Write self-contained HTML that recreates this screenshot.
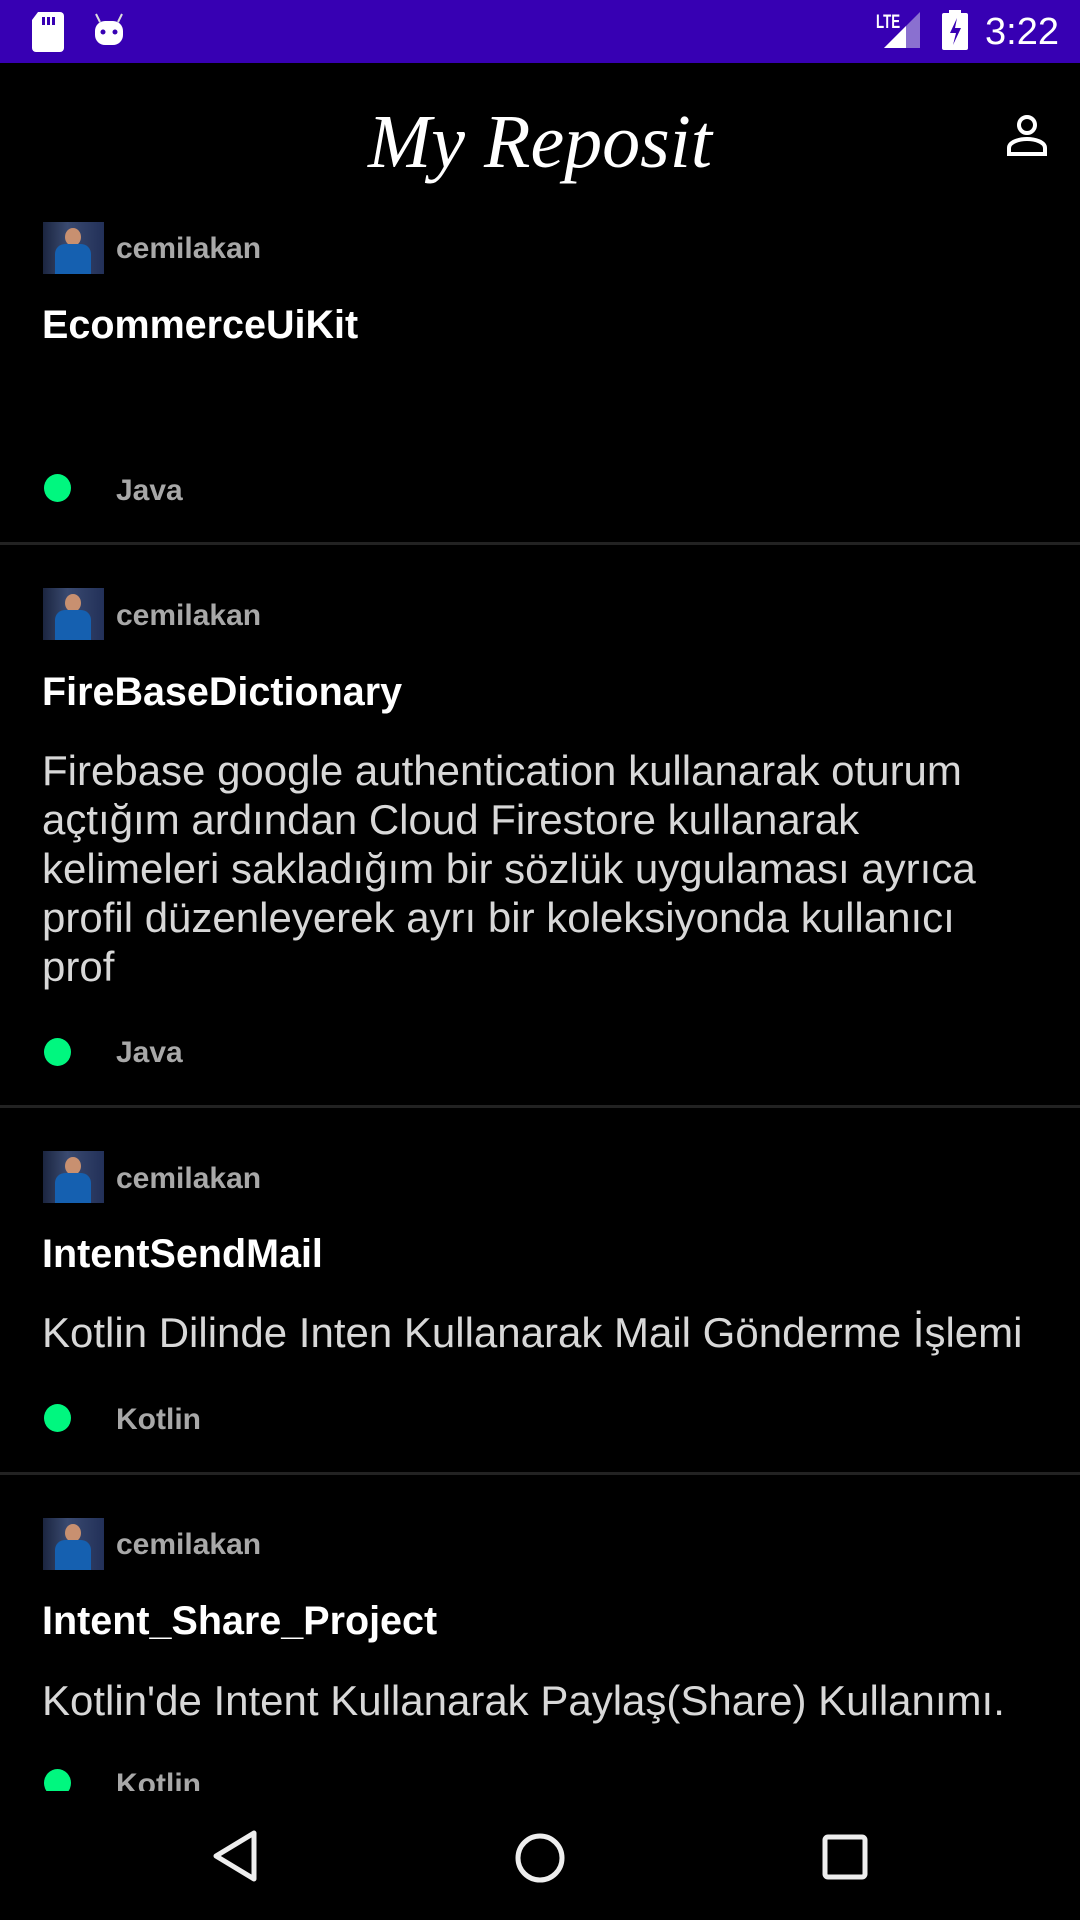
<!DOCTYPE html>
<html><head><meta charset="utf-8"><style>
*{margin:0;padding:0;box-sizing:border-box}
body{width:1080px;height:1920px;background:#000;position:relative;overflow:hidden;font-family:"Liberation Sans",sans-serif}
.a{position:absolute;white-space:nowrap}
.sb{left:0;top:0;width:1080px;height:63px;background:#3700b3}
.av{position:absolute;width:61px;height:52px;background:linear-gradient(90deg,#1b2540,#3a4a70 40%,#223058);overflow:hidden}
.av:before{content:"";position:absolute;left:22px;top:6px;width:16px;height:18px;border-radius:50%;background:#c89070}
.av:after{content:"";position:absolute;left:12px;top:22px;width:36px;height:32px;border-radius:10px 10px 0 0;background:#1560b0}
.un{font-weight:bold;font-size:30px;color:#a8a8a8;line-height:40px}
.ti{font-weight:bold;font-size:39.5px;color:#fff;line-height:50px}
.ds{font-size:42px;color:#d8d8d8;line-height:49px}
.dot{position:absolute;width:27px;height:28px;border-radius:50%;background:#00f77f}
.lg{font-weight:bold;font-size:30px;color:#a8a8a8;line-height:40px}
.dv{position:absolute;left:0;width:1080px;height:3px;background:#222}
</style></head><body>
<div class="a sb"></div>
<svg class="a" style="left:30px;top:12px" width="36" height="40" viewBox="0 0 36 40"><path d="M8 0H30a4 4 0 0 1 4 4V36a4 4 0 0 1-4 4H6a4 4 0 0 1-4-4V8z" fill="#fff"/><rect x="12" y="5" width="3" height="8" fill="#3700b3"/><rect x="17" y="5" width="3" height="8" fill="#3700b3"/><rect x="22" y="5" width="3" height="8" fill="#3700b3"/></svg>
<svg class="a" style="left:92px;top:10px" width="34" height="36" viewBox="0 0 34 36"><path d="M4 4l4 8M30 4l-4 8" stroke="#ddd" stroke-width="2"/><rect x="3" y="11" width="28" height="24" rx="10" fill="#fff"/><circle cx="11" cy="22" r="2.5" fill="#3700b3"/><circle cx="23" cy="22" r="2.5" fill="#3700b3"/></svg>
<div class="a" style="left:876px;top:12px;font-size:19px;font-weight:bold;color:#fff;transform:scaleX(.7);transform-origin:left">LTE</div>
<svg class="a" style="left:884px;top:12px" width="40" height="36"><path d="M36 0V36H0z" fill="#8a70d0"/><path d="M22 14V36H0z" fill="#fff"/></svg>
<svg class="a" style="left:942px;top:10px" width="26" height="40"><rect x="7" y="0" width="12" height="4" fill="#fff"/><rect x="0" y="3" width="26" height="37" rx="2" fill="#fff"/><path d="M15 8l-7 15h6l-3 12 8-17h-6z" fill="#3700b3"/></svg>
<div class="a" style="left:985px;top:8px;font-size:38px;color:#fff;line-height:48px">3:22</div>
<div class="a" style="left:0;width:1080px;top:92px;text-align:center;font-family:'Liberation Serif',serif;font-style:italic;font-size:76px;color:#fff;line-height:100px">My Reposit</div>
<svg class="a" style="left:1005px;top:114px" width="44" height="44" viewBox="0 0 44 44"><circle cx="22" cy="11" r="8" fill="none" stroke="#fff" stroke-width="4"/><path d="M4 40V34c0-6 10-9 18-9s18 3 18 9v6z" fill="none" stroke="#fff" stroke-width="4"/></svg>

<div class="av" style="left:43px;top:222px"></div>
<div class="a un" style="left:116px;top:229px">cemilakan</div>
<div class="a ti" style="left:42px;top:300px">EcommerceUiKit</div>
<div class="dot" style="left:44px;top:474px"></div>
<div class="a lg" style="left:116px;top:471px">Java</div>
<div class="dv" style="top:542px"></div>

<div class="av" style="left:43px;top:588px"></div>
<div class="a un" style="left:116px;top:596px">cemilakan</div>
<div class="a ti" style="left:42px;top:667px">FireBaseDictionary</div>
<div class="a ds" style="left:42px;top:746px">Firebase google authentication kullanarak oturum<br>açtığım ardından Cloud Firestore kullanarak<br>kelimeleri sakladığım bir sözlük uygulaması ayrıca<br>profil düzenleyerek ayrı bir koleksiyonda kullanıcı<br>prof</div>
<div class="dot" style="left:44px;top:1038px"></div>
<div class="a lg" style="left:116px;top:1033px">Java</div>
<div class="dv" style="top:1105px"></div>

<div class="av" style="left:43px;top:1151px"></div>
<div class="a un" style="left:116px;top:1159px">cemilakan</div>
<div class="a ti" style="left:42px;top:1229px">IntentSendMail</div>
<div class="a ds" style="left:42px;top:1308px">Kotlin Dilinde Inten Kullanarak Mail Gönderme İşlemi</div>
<div class="dot" style="left:44px;top:1404px"></div>
<div class="a lg" style="left:116px;top:1400px">Kotlin</div>
<div class="dv" style="top:1472px"></div>

<div class="av" style="left:43px;top:1518px"></div>
<div class="a un" style="left:116px;top:1525px">cemilakan</div>
<div class="a ti" style="left:42px;top:1596px">Intent_Share_Project</div>
<div class="a ds" style="left:42px;top:1676px">Kotlin'de Intent Kullanarak Paylaş(Share) Kullanımı.</div>
<div class="a" style="left:0;top:1791px;width:1080px;height:129px;background:#000"></div>
<div style="position:absolute;left:0;top:1700px;width:1080px;height:91px;overflow:hidden">
<div class="dot" style="left:44px;top:69px"></div>
<div class="a lg" style="left:116px;top:65px">Kotlin</div>
</div>
<svg class="a" style="left:210px;top:1830px" width="50" height="52" viewBox="0 0 50 52"><path d="M44 3L6 26l38 23z" fill="none" stroke="#eee" stroke-width="5" stroke-linejoin="round"/></svg>
<svg class="a" style="left:514px;top:1832px" width="52" height="52"><circle cx="26" cy="26" r="22" fill="none" stroke="#eee" stroke-width="5"/></svg>
<svg class="a" style="left:822px;top:1834px" width="46" height="46"><rect x="3" y="3" width="40" height="40" rx="3" fill="none" stroke="#eee" stroke-width="5"/></svg>
</body></html>
